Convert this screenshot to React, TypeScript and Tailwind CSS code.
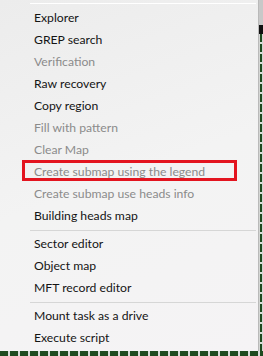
import React from "react";

type Item = { label: string; disabled?: boolean; boxed?: boolean } | "sep";

const items: Item[] = [
  { label: "Explorer" },
  { label: "GREP search" },
  { label: "Verification", disabled: true },
  { label: "Raw recovery" },
  { label: "Copy region" },
  { label: "Fill with pattern", disabled: true },
  { label: "Clear Map", disabled: true },
  { label: "Create submap using the legend", disabled: true, boxed: true },
  { label: "Create submap use heads info", disabled: true },
  { label: "Building heads map" },
  "sep",
  { label: "Sector editor" },
  { label: "Object map" },
  { label: "MFT record editor" },
  "sep",
  { label: "Mount task as a drive" },
  { label: "Execute script" },
];

export default function App() {
  return (
    <div
      className="w-[263px] h-[356px] overflow-hidden bg-[#d9dcd9] flex flex-col"
      style={{ fontFamily: 'Lato, "Noto Sans", Arial, sans-serif' }}
    >
      <div className="flex h-[351px]">
        <div className="w-[259px] h-[351px] bg-[linear-gradient(160deg,#ececec,#f3f3f3_50%,#f5f3f5)] border-r border-[#b9b9b9] flex flex-col">
          <div className="h-[7px] flex items-start pt-[3px] pl-[30px] pr-[2px]">
            <div className="h-px w-full bg-[#d6d6d6] border-b border-white" />
          </div>
          {items.map((it, i) =>
            it === "sep" ? (
              <div key={i} className="h-[6px] flex items-center pl-[30px] pr-[2px]">
                <div className="h-px w-full bg-[#d6d6d6]" />
              </div>
            ) : (
              <div key={i} className="h-[22px] flex items-center pl-[34px] relative">
                <span
                  className={
                    "text-[12.2px] leading-none whitespace-nowrap " +
                    (it.disabled ? "text-[#8b8b8b]" : "text-[#141414]")
                  }
                >
                  {it.label}
                </span>
                {it.boxed && (
                  <div className="absolute left-[22px] top-[-1px] w-[215px] h-[21px] border-[3px] border-[#e3141f]" />
                )}
              </div>
            )
          )}
        </div>
        <div className="w-[4px] h-full flex flex-col bg-[#d4d6d4]">
          <div className="h-[25px] bg-[#c8c8c8]" />
          <div className="h-[9px] bg-[#111]" />
          <div className="flex-1 bg-[repeating-linear-gradient(180deg,#1f4a1f_0px,#1f4a1f_8px,#d8dcd8_8px,#d8dcd8_10px)] ml-[1px] w-[2px]" />
        </div>
      </div>
      <div className="h-[5px] bg-[repeating-linear-gradient(90deg,#1f4a1f_0px,#1f4a1f_8px,#d8dcd8_8px,#d8dcd8_10px)]" />
    </div>
  );
}
